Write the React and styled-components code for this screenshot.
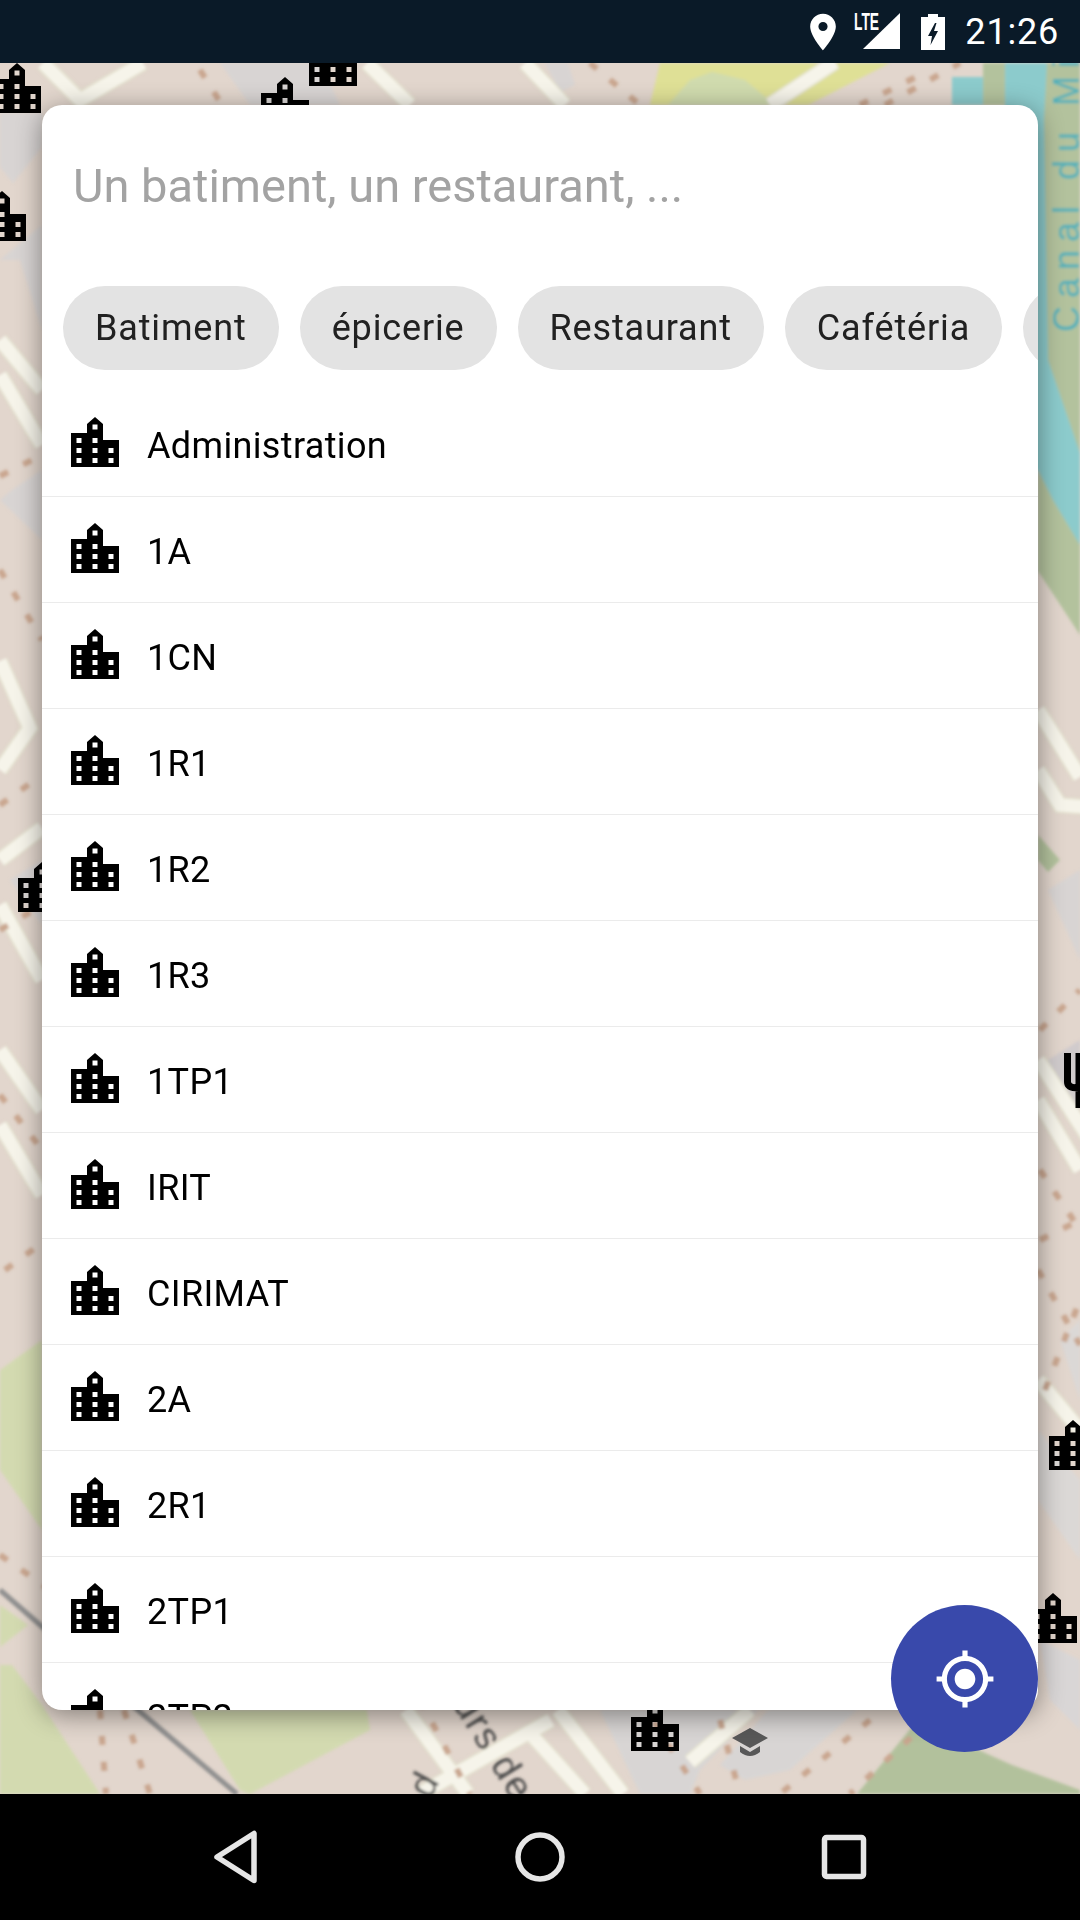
import styled, { createGlobalStyle } from "styled-components"

const GlobalStyle = createGlobalStyle`
    html, body {
        margin: 0;
        padding: 0;
        background: #000;
    }
    body {
        font-family: Roboto, "Noto Sans", sans-serif;
    }
`

const CHIPS = ["Batiment", "épicerie", "Restaurant", "Cafétéria"]
const PLACES = ["Administration", "1A", "1CN", "1R1", "1R2", "1R3", "1TP1", "IRIT", "CIRIMAT", "2A", "2R1", "2TP1", "2TP2"]

// map layers, in screen coordinates
const AREAS = [
    { fill: "#d8d4d3", points: "0,113 42,113 42,147 13,183 0,167" },
    { fill: "#d8d4d3", points: "0,260 42,225 42,330 20,260" },
    { fill: "#d8d4d3", points: "220,63 320,63 340,105 250,105" },
    { fill: "#d8d4d3", points: "545,63 568,63 575,85 560,92" },
    { fill: "#d8d4d3", points: "0,500 42,540 42,470 12,490" },
    { fill: "#d8d4d3", points: "10,880 42,860 42,925" },
    { fill: "#dfe096", points: "650,105 660,63 890,63 808,105" },
    { fill: "#d0dbae", points: "668,105 690,80 712,72 745,80 775,105" },
    { fill: "#b3c29d", points: "983,63 1005,63 1005,105 983,105" },
    { fill: "#b3c29d", points: "1038,63 1080,63 1080,635 1038,571" },
    { fill: "#8ccbcc", points: "1005,63 1047,63 1044,120 1048,360 1080,453 1080,545 1053,500 1038,470 1005,470" },
    { fill: "#8ccbcc", points: "952,77 983,77 983,105 952,105" },
    { fill: "#b3c29d", points: "1038,835 1060,860 1048,872 1038,860" },
    { fill: "#d8d4d3", points: "1048,890 1080,870 1080,960" },
    { fill: "#d0cbcc", points: "1048,1060 1080,1040 1080,1110 1062,1105" },
    { fill: "#dbd8d6", points: "1060,1340 1080,1320 1080,1400" },
    { fill: "#dbd8d6", points: "1038,1430 1080,1480 1080,1560 1038,1500" },
    { fill: "#d9d6d6", points: "1040,1640 1080,1660 1080,1730 1050,1700" },
    { fill: "#d3dab0", points: "0,1370 42,1340 42,1530 0,1470" },
    { fill: "#d3dab0", points: "0,1605 0,1647 28,1625" },
    { fill: "#d3dab0", points: "0,1665 12,1665 42,1705 100,1794 0,1794" },
    { fill: "#d3dab0", points: "190,1710 367,1710 370,1730 250,1794 240,1790" },
    { fill: "#d8d5d4", points: "600,1710 758,1710 700,1770 690,1794 640,1794" },
    { fill: "#d8d5d4", points: "768,1710 857,1710 790,1770 745,1780 720,1765" },
    { fill: "#b2c19c", points: "857,1794 916,1722 1012,1765 1080,1790 1080,1794" },
]

const ROADS = [
    "43,63 80,100 143,63",
    "367,63 410,105",
    "525,63 565,105",
    "770,105 835,62",
    "0,340 42,390",
    "0,375 42,445",
    "0,661 30,728 0,770",
    "0,860 42,828",
    "0,905 42,980",
    "0,1050 42,1110",
    "0,1125 42,1195",
    "1038,710 1080,777",
    "1038,770 1060,805 1100,808",
    "1038,1100 1080,1170",
    "1038,1060 1090,1140",
    "1038,1380 1080,1430",
    "406,1710 468,1794",
    "551,1720 420,1794",
    "527,1730 585,1794",
    "558,1710 623,1794",
    "750,1710 690,1762",
]

const FOOTWAYS = [
    "200,70 222,105",
    "0,476 42,455",
    "0,570 42,640",
    "0,805 42,775",
    "0,930 42,905",
    "0,1095 42,1150",
    "5,1270 42,1243",
    "0,1555 50,1590",
    "100,1710 106,1794",
    "124,1710 150,1794",
    "420,1700 470,1794",
    "640,1700 700,1794",
    "720,1720 740,1794",
    "870,1720 780,1794",
    "930,1720 850,1794",
    "1040,1170 1080,1230",
    "1040,1240 1080,1220",
    "1038,1270 1080,1345",
    "1045,1390 1080,1300",
    "1040,1030 1080,990",
    "590,63 640,105",
    "885,105 960,63",
    "860,105 920,75",
]

const MARKERS = [
    [-7, 63],
    [309, 36],
    [261, 77],
    [-22, 191],
    [18, 862],
    [1049, 1420],
    [1029, 1593],
    [631, 1701],
]

function Building() {
    return (
        <RowIcon viewBox='0 0 48 50'>
            <use href='#building' />
        </RowIcon>
    )
}

function MapBackground() {
    return (
        <MapCanvas viewBox='0 63 1080 1731'>
            <defs>
                <filter id='soft'>
                    <feGaussianBlur stdDeviation='1.4' />
                </filter>
                <path
                    id='building'
                    fillRule='evenodd'
                    d='M0 16H16V7L24 0L32 7V23H48V50H0Z M5.5 21v5h5v-5z M21.5 21v5h5v-5z M21.5 7.500v5h5v-5z M5.500 31v5h5v-5z M21.500 31v5h5v-5z M37.500 31v5h5v-5z M5.500 41v5h5v-5z M21.500 41v5h5v-5z M37.500 41v5h5v-5z'
                />
            </defs>
            <g filter='url(#soft)'>
                {AREAS.map(area => (
                    <polygon key={area.points} points={area.points} fill={area.fill} />
                ))}
                {ROADS.map(points => (
                    <RoadCasing key={points} points={points} />
                ))}
                {ROADS.map(points => (
                    <Road key={points} points={points} />
                ))}
                <GreyLine points='0,1590 138,1710 237,1794' />
                {FOOTWAYS.map(points => (
                    <Footway key={points} points={points} />
                ))}
                <WaterLabel transform='translate(1079 332) rotate(-90)'>Canal du Midi</WaterLabel>
                <StreetLabel transform='translate(452 1704) rotate(58)'>urs de</StreetLabel>
                <StreetLabel transform='translate(430 1800) rotate(-62)'>d</StreetLabel>
            </g>
            {MARKERS.map(([x, y]) => (
                <use key={`${x}-${y}`} href='#building' x={x} y={y} />
            ))}
            <Fork d='M1067.500 1053V1082Q1067.500 1088 1079 1088M1079 1053V1108M1090 1053V1082' />
            <path
                fill='#585858'
                d='M750 1728L768 1738L750 1748L732 1738Z M740 1746L750 1752L760 1746V1752Q750 1760 740 1752Z'
            />
        </MapCanvas>
    )
}

export default function App() {
    return (
        <Screen>
            <GlobalStyle />
            <StatusBar>
                <PinIcon viewBox='0 0 24 24'>
                    <path
                        fill='#fff'
                        d='M12 2C8.130 2 5 5.130 5 9c0 5.250 7 13 7 13s7-7.750 7-13c0-3.870-3.130-7-7-7zm0 9.500a2.500 2.500 0 010-5 2.500 2.500 0 010 5z'
                    />
                </PinIcon>
                <Signal>
                    <LteLabel>LTE</LteLabel>
                    <svg width='46' height='37' viewBox='0 0 46 37'>
                        <path fill='#fff' d='M9 36L46 0V36Z' />
                    </svg>
                </Signal>
                <BatteryIcon viewBox='0 0 24 36'>
                    <path
                        fill='#fff'
                        fillRule='evenodd'
                        d='M7 0H17V3H24V36H0V3H7Z M14 9L7 22H11L9.500 31L17 17H13L15.500 9Z'
                    />
                </BatteryIcon>
                <Clock>21:26</Clock>
            </StatusBar>

            <MapArea>
                <MapBackground />
                <SearchCard>
                    <SearchHint>Un batiment, un restaurant, ...</SearchHint>
                    <ChipRow>
                        {CHIPS.map(label => (
                            <Chip key={label}>{label}</Chip>
                        ))}
                        <ClippedChip />
                    </ChipRow>
                    <PlaceList>
                        {PLACES.map(name => (
                            <PlaceRow key={name}>
                                <Building />
                                <PlaceName>{name}</PlaceName>
                            </PlaceRow>
                        ))}
                    </PlaceList>
                </SearchCard>
                <LocateButton>
                    <svg width='62' height='62' viewBox='0 0 24 24'>
                        <path
                            fill='#fff'
                            d='M12 8c-2.210 0-4 1.790-4 4s1.790 4 4 4 4-1.790 4-4-1.790-4-4-4zm8.940 3c-.46-4.170-3.770-7.480-7.940-7.940V1h-2v2.060C6.830 3.520 3.520 6.830 3.060 11H1v2h2.060c.46 4.170 3.770 7.480 7.940 7.940V23h2v-2.060c4.170-.46 7.480-3.770 7.940-7.940H23v-2h-2.060zM12 19c-3.870 0-7-3.130-7-7s3.130-7 7-7 7 3.130 7 7-3.130 7-7 7z'
                        />
                    </svg>
                </LocateButton>
            </MapArea>

            <NavBar>
                <NavIcon viewBox='0 0 48 56'>
                    <path d='M42 4.500V51.500L5 28Z' />
                </NavIcon>
                <NavIcon viewBox='0 0 56 56'>
                    <circle cx='28' cy='28' r='22' />
                </NavIcon>
                <NavIcon viewBox='0 0 56 56'>
                    <rect x='8.500' y='8.500' width='39' height='39' rx='2' />
                </NavIcon>
            </NavBar>
        </Screen>
    )
}

const Screen = styled.div`
    width: 1080px;
    height: 1920px;
    display: flex;
    flex-direction: column;
    overflow: hidden;
`
const StatusBar = styled.div`
    position: relative;
    z-index: 2;
    height: 63px;
    flex: none;
    display: flex;
    align-items: center;
    justify-content: flex-end;
    padding-right: 21px;
    background: #0a1a28;
    color: #fff;
`
const PinIcon = styled.svg`
    width: 44px;
    height: 44px;
    margin-right: 9px;
`
const Signal = styled.div`
    position: relative;
    width: 46px;
    height: 37px;
    margin-right: 21px;
    svg {
        display: block;
    }
`
const LteLabel = styled.span`
    position: absolute;
    left: 0;
    top: -4px;
    font-family: "Liberation Sans", sans-serif;
    font-size: 23px;
    font-weight: 700;
    line-height: 26px;
    transform: scaleX(0.6);
    transform-origin: left center;
`
const BatteryIcon = styled.svg`
    width: 24px;
    height: 36px;
    margin-right: 20px;
`
const Clock = styled.span`
    font-size: 36px;
    line-height: 40px;
    letter-spacing: 0.8px;
`
const MapArea = styled.div`
    position: relative;
    flex: 1;
    padding: 42px 42px 84px;
    background: #e2d6cd;
    overflow: hidden;
`
const MapCanvas = styled.svg`
    position: absolute;
    left: 0;
    top: 0;
    width: 1080px;
    height: 1731px;
`
const Road = styled.polyline`
    fill: none;
    stroke: #f6f4ea;
    stroke-width: 13;
`
const RoadCasing = styled.polyline`
    fill: none;
    stroke: #e2e0cc;
    stroke-width: 16;
`
const Footway = styled.polyline`
    fill: none;
    stroke: #c9a68f;
    stroke-width: 6;
    stroke-dasharray: 9 17;
`
const GreyLine = styled.polyline`
    fill: none;
    stroke: #8f8f8f;
    stroke-width: 5;
`
const WaterLabel = styled.text`
    font-family: "Liberation Sans", sans-serif;
    font-size: 36px;
    letter-spacing: 8px;
    fill: #4fb0ba;
`
const StreetLabel = styled.text`
    font-family: "Liberation Sans", sans-serif;
    font-size: 38px;
    letter-spacing: 2px;
    fill: #484848;
`
const Fork = styled.path`
    fill: none;
    stroke: #000;
    stroke-width: 7;
`
const SearchCard = styled.div`
    position: relative;
    height: 1605px;
    display: flex;
    flex-direction: column;
    overflow: hidden;
    background: #fff;
    border-radius: 20px;
    box-shadow: 0 5px 26px rgba(0, 0, 0, 0.42);
`
const SearchHint = styled.div`
    height: 181px;
    flex: none;
    padding: 53px 0 0 31px;
    box-sizing: border-box;
    font-size: 47px;
    line-height: 56px;
    color: #a3a3a3;
`
const ChipRow = styled.div`
    flex: none;
    display: flex;
    gap: 21px;
    padding-left: 21px;
    margin-bottom: 21px;
`
const Chip = styled.div`
    flex: none;
    height: 84px;
    padding: 0 32px;
    display: flex;
    align-items: center;
    border-radius: 42px;
    background: #e3e3e3;
    color: #212121;
    font-size: 36px;
    letter-spacing: 0.85px;
`
const ClippedChip = styled(Chip)`
    width: 120px;
`
const PlaceList = styled.div`
    flex: 1;
    overflow: hidden;
`
const PlaceRow = styled.div`
    height: 106px;
    box-sizing: border-box;
    display: flex;
    align-items: center;
    gap: 28px;
    padding-left: 29px;
    border-bottom: 1px solid #ebebeb;
`
const RowIcon = styled.svg`
    width: 48px;
    height: 50px;
    flex: none;
    margin-top: -4px;
`
const PlaceName = styled.span`
    padding-top: 4px;
    font-size: 36px;
    letter-spacing: 0.35px;
    color: #000;
`
const LocateButton = styled.div`
    position: absolute;
    right: 42px;
    top: 1542px;
    width: 147px;
    height: 147px;
    display: flex;
    align-items: center;
    justify-content: center;
    border-radius: 50%;
    background: #3949ab;
`
const NavBar = styled.div`
    height: 126px;
    flex: none;
    display: grid;
    grid-template-columns: repeat(3, 304px);
    justify-content: center;
    justify-items: center;
    align-items: center;
    background: #000;
    position: relative;
    z-index: 2;
`
const NavIcon = styled.svg`
    height: 56px;
    fill: none;
    stroke: #e6e6e6;
    stroke-width: 5.500;
    stroke-linejoin: round;
`
